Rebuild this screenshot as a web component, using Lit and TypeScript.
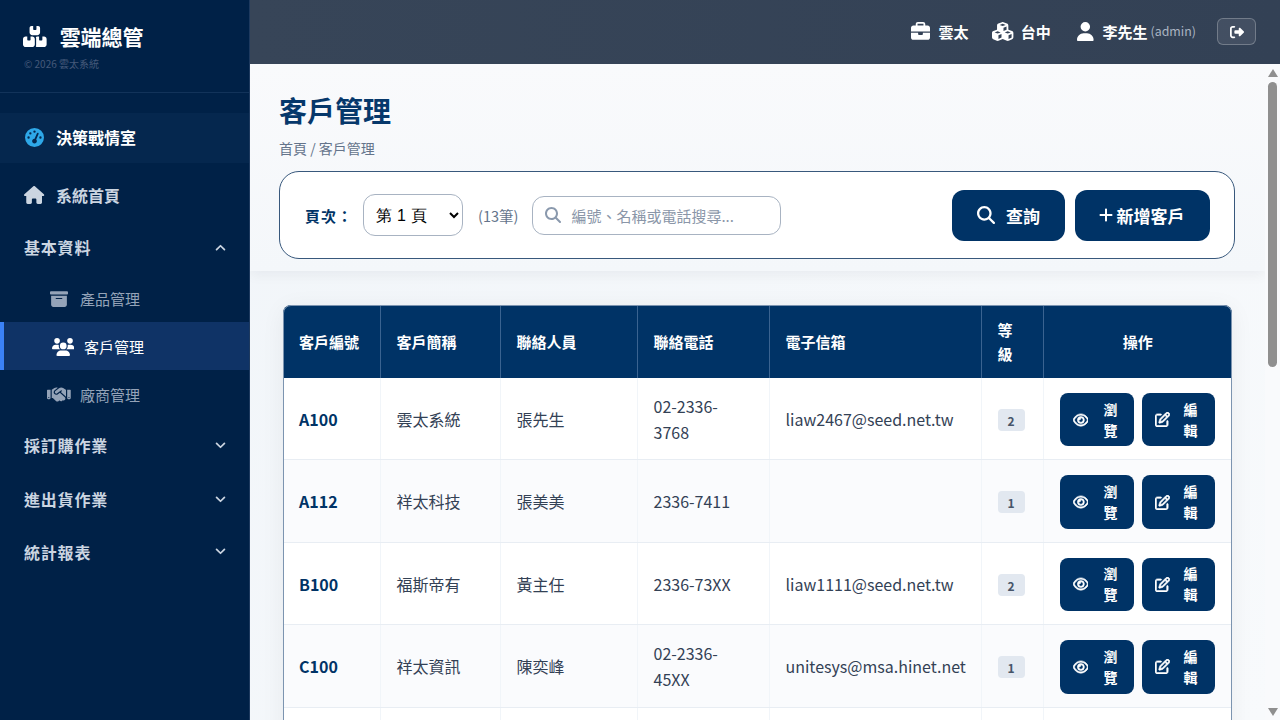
import { LitElement, html, css, svg } from 'lit';
import { customElement } from 'lit/decorators.js';

const icons: Record<string, [number, string]> = {
  boxes: [576, 'M248 0H208c-26.5 0-48 21.5-48 48V160c0 35.3 28.7 64 64 64H352c35.3 0 64-28.7 64-64V48c0-26.5-21.5-48-48-48H328V80c0 8.8-7.2 16-16 16H264c-8.8 0-16-7.2-16-16V0zM64 256c-35.3 0-64 28.7-64 64V448c0 35.3 28.7 64 64 64H224c35.3 0 64-28.7 64-64V320c0-35.3-28.7-64-64-64H184v80c0 8.8-7.2 16-16 16H120c-8.8 0-16-7.2-16-16V256H64zM352 512H512c35.3 0 64-28.7 64-64V320c0-35.3-28.7-64-64-64H472v80c0 8.8-7.2 16-16 16H408c-8.8 0-16-7.2-16-16V256H352c-15 0-28.8 5.2-39.7 13.8c4.9 10.4 7.7 22 7.7 34.2V464c0 12.2-2.8 23.8-7.7 34.2C323.2 506.8 337 512 352 512z'],
  gauge: [512, 'M0 256a256 256 0 1 1 512 0A256 256 0 1 1 0 256zM288 96a32 32 0 1 0 -64 0 32 32 0 1 0 64 0zM256 416c35.3 0 64-28.7 64-64c0-17.4-6.9-33.1-18.1-44.6L366 161.7c5.3-12.1-.2-26.3-12.3-31.6s-26.3 .2-31.6 12.3L257.9 288c-.6 0-1.3 0-1.9 0c-35.3 0-64 28.7-64 64s28.7 64 64 64zM176 144a32 32 0 1 0 -64 0 32 32 0 1 0 64 0zM96 288a32 32 0 1 0 0-64 32 32 0 1 0 0 64zm352-32a32 32 0 1 0 -64 0 32 32 0 1 0 64 0z'],
  home: [576, 'M575.8 255.5c0 18-15 32.1-32 32.1h-32l.7 160.2c0 2.7-.2 5.4-.5 8.1V472c0 22.1-17.9 40-40 40H456c-1.1 0-2.2 0-3.3-.1c-1.4 .1-2.8 .1-4.2 .1H416 392c-22.1 0-40-17.9-40-40V448 384c0-17.7-14.3-32-32-32H256c-17.7 0-32 14.3-32 32v64 24c0 22.1-17.9 40-40 40H160 128.1c-1.5 0-3-.1-4.5-.2c-1.2 .1-2.4 .2-3.6 .2H104c-22.1 0-40-17.9-40-40V360c0-.9 0-1.9 .1-2.8V287.6H32c-18 0-32-14-32-32.1c0-9 3-17 10-24L266.4 8c7-7 15-8 22-8s15 2 21 7L564.8 231.5c8 7 12 15 11 24z'],
  archive: [512, 'M32 32H480c17.7 0 32 14.3 32 32V96c0 17.7-14.3 32-32 32H32C14.3 128 0 113.7 0 96V64C0 46.3 14.3 32 32 32zm0 128H480V416c0 35.3-28.7 64-64 64H96c-35.3 0-64-28.7-64-64V160zm128 80c0 8.8 7.2 16 16 16H336c8.8 0 16-7.2 16-16s-7.2-16-16-16H176c-8.8 0-16 7.2-16 16z'],
  users: [640, 'M144 0a80 80 0 1 1 0 160A80 80 0 1 1 144 0zM512 0a80 80 0 1 1 0 160A80 80 0 1 1 512 0zM0 298.7C0 239.8 47.8 192 106.7 192h42.7c15.9 0 31 3.5 44.6 9.7c-1.3 7.2-1.9 14.7-1.9 22.3c0 38.2 16.8 72.5 43.3 96c-.2 0-.4 0-.7 0H21.3C9.6 320 0 310.4 0 298.7zM405.3 320c-.2 0-.4 0-.7 0c26.6-23.5 43.3-57.8 43.3-96c0-7.6-.7-15-1.9-22.3c13.6-6.3 28.7-9.7 44.6-9.7h42.7C592.2 192 640 239.8 640 298.7c0 11.8-9.6 21.3-21.3 21.3H405.3zM224 224a96 96 0 1 1 192 0 96 96 0 1 1 -192 0zM128 485.3C128 411.7 187.7 352 261.3 352H378.7C452.3 352 512 411.7 512 485.3c0 14.7-11.9 26.7-26.7 26.7H154.7c-14.7 0-26.7-11.9-26.7-26.7z'],
  handshake: [640, 'M323.4 85.2l-96.8 78.4c-16.1 13-19.2 36.4-7 53.1c12.9 17.8 38 21.3 55.3 7.8l99.3-77.2c7-5.4 17-4.2 22.5 2.8s4.2 17-2.8 22.5l-20.9 16.2L512 316.8V128h-.7l-3.9-2.5L434.8 79c-15.3-9.8-33.2-15-51.4-15c-21.8 0-43 7.5-60 21.2zm22.8 124.4l-51.7 40.2C263 274.4 217.3 268 193.7 235.6c-22.2-30.5-16.6-73.1 12.7-96.8l83.2-67.3c-11.6-4.9-24.1-7.4-36.8-7.4C234 64 215.7 69.6 200 80l-72 48V352h28.2l91.4 83.4c19.6 17.9 49.9 16.5 67.8-3.1c5.5-6.1 9.2-13.2 11.1-20.6l17 15.6c19.5 17.9 49.9 16.6 67.8-2.9c4.5-4.9 7.8-10.6 9.9-16.5c19.4 13 45.8 10.3 62.1-7.5c17.9-19.5 16.6-49.9-2.9-67.8l-134.2-123zM16 128c-8.8 0-16 7.2-16 16V352c0 17.7 14.3 32 32 32H64c17.7 0 32-14.3 32-32V128H16zM48 320a16 16 0 1 1 0 32 16 16 0 1 1 0-32zM544 128V352c0 17.7 14.3 32 32 32h32c17.7 0 32-14.3 32-32V144c0-8.8-7.2-16-16-16H544zm32 208a16 16 0 1 1 32 0 16 16 0 1 1 -32 0z'],
  briefcase: [512, 'M184 48H328c4.4 0 8 3.6 8 8V96H176V56c0-4.4 3.6-8 8-8zm-56 8V96H64C28.7 96 0 124.7 0 160v96H192 320 512V160c0-35.3-28.7-64-64-64H384V56c0-30.9-25.1-56-56-56H184c-30.9 0-56 25.1-56 56zM512 288H320v32c0 17.7-14.3 32-32 32H224c-17.7 0-32-14.3-32-32V288H0V416c0 35.3 28.7 64 64 64H448c35.3 0 64-28.7 64-64V288z'],
  cubes: [576, 'M290.8 48.6l78.4 29.7L288 109.5 206.8 78.3l78.4-29.7c1.8-.7 3.8-.7 5.7 0zM136 92.5V204.7c-1.3 .4-2.6 .8-3.9 1.3l-96 36.4C14.4 250.6 0 271.5 0 294.7V413.9c0 22.2 13.1 42.3 33.5 51.3l96 42.2c14.4 6.3 30.7 6.3 45.1 0L288 457.5l113.5 49.9c14.4 6.3 30.7 6.3 45.1 0l96-42.2c20.3-8.9 33.5-29.1 33.5-51.3V294.7c0-23.3-14.4-44.1-36.1-52.4l-96-36.4c-1.3-.5-2.6-.9-3.9-1.3V92.5c0-23.3-14.4-44.1-36.1-52.4l-96-36.4c-12.8-4.8-26.9-4.8-39.7 0l-96 36.4C150.4 48.4 136 69.3 136 92.5zM392 210.6l-82.4 31.2V152.6L392 121v89.6zM154.8 250.9l78.4 29.7L152 311.7 70.8 280.6l78.4-29.7c1.8-.7 3.8-.7 5.7 0zm18.8 204.4V354.8L256 323.2v95.9l-82.4 36.2zM421.2 250.9c1.8-.7 3.8-.7 5.7 0l78.4 29.7L424 311.7l-81.2-31.1 78.4-29.7zM523.2 421.2l-77.6 34.1V354.8L528 323.2v90.7c0 3.2-1.9 6-4.8 7.3z'],
  user: [448, 'M224 256A128 128 0 1 0 224 0a128 128 0 1 0 0 256zm-45.7 48C79.8 304 0 383.8 0 482.3C0 498.7 13.3 512 29.7 512H418.3c16.4 0 29.7-13.3 29.7-29.7C448 383.8 368.2 304 269.7 304H178.3z'],
  logout: [512, 'M377.9 105.9L500.7 228.7c7.2 7.2 11.3 17.1 11.3 27.3s-4.1 20.1-11.3 27.3L377.9 406.1c-6.4 6.4-15 9.9-24 9.9c-18.7 0-33.9-15.2-33.9-33.9l0-62.1-128 0c-17.7 0-32-14.3-32-32l0-64c0-17.7 14.3-32 32-32l128 0 0-62.1c0-18.7 15.2-33.9 33.9-33.9c9 0 17.6 3.6 24 9.9zM160 96L96 96c-17.7 0-32 14.3-32 32l0 256c0 17.7 14.3 32 32 32l64 0c17.7 0 32 14.3 32 32s-14.3 32-32 32l-64 0c-53 0-96-43-96-96L0 128C0 75 43 32 96 32l64 0c17.7 0 32 14.3 32 32s-14.3 32-32 32z'],
  search: [512, 'M416 208c0 45.9-14.9 88.3-40 122.7L502.6 457.4c12.5 12.5 12.5 32.8 0 45.3s-32.8 12.5-45.3 0L330.7 376c-34.4 25.2-76.8 40-122.7 40C93.1 416 0 322.9 0 208S93.1 0 208 0S416 93.1 416 208zM208 352a144 144 0 1 0 0-288 144 144 0 1 0 0 288z'],
  plus: [448, 'M256 80c0-17.7-14.3-32-32-32s-32 14.3-32 32V224H48c-17.7 0-32 14.3-32 32s14.3 32 32 32H192V432c0 17.7 14.3 32 32 32s32-14.3 32-32V288H400c17.7 0 32-14.3 32-32s-14.3-32-32-32H256V80z'],
  eye: [576, 'M288 80c-65.2 0-118.8 29.6-159.9 67.7C89.6 183.5 63 226 49.4 256c13.6 30 40.2 72.5 78.6 108.3C169.2 402.4 222.8 432 288 432s118.8-29.6 159.9-67.7C486.4 328.5 513 286 526.6 256c-13.6-30-40.2-72.5-78.6-108.3C406.8 109.6 353.2 80 288 80zM95.4 112.6C142.5 68.8 207.2 32 288 32s145.5 36.8 192.6 80.6c46.8 43.5 78.1 95.4 93 131.1c3.3 7.9 3.3 16.7 0 24.6c-14.9 35.7-46.2 87.7-93 131.1C433.5 443.2 368.8 480 288 480s-145.5-36.8-192.6-80.6C48.6 356 17.3 304 2.5 268.3c-3.3-7.9-3.3-16.7 0-24.6C17.3 208 48.6 156 95.4 112.6zM288 336c44.2 0 80-35.8 80-80s-35.8-80-80-80c-.7 0-1.3 0-2 0c1.3 5.1 2 10.5 2 16c0 35.3-28.7 64-64 64c-5.5 0-10.9-.7-16-2c0 .7 0 1.3 0 2c0 44.2 35.8 80 80 80zm0-208a128 128 0 1 1 0 256 128 128 0 1 1 0-256z'],
  edit: [512, 'M441 58.9L453.1 71c9.4 9.4 9.4 24.6 0 33.9L424 134.1 377.9 88 407 58.9c9.4-9.4 24.6-9.4 33.9 0zM209.8 256.2L344 121.9 390.1 168 255.8 302.2c-2.9 2.9-6.5 5-10.4 6.1l-58.5 16.7 16.7-58.5c1.1-3.9 3.2-7.5 6.1-10.4zM373.1 25L175.8 222.2c-8.7 8.7-15 19.4-18.3 31.1l-28.6 100c-2.4 8.4-.1 17.4 6.1 23.6s15.2 8.5 23.6 6.1l100-28.6c11.8-3.4 22.5-9.7 31.1-18.3L487 138.9c28.1-28.1 28.1-73.7 0-101.8L474.9 25C446.8-3.1 401.2-3.1 373.1 25zM88 64C39.4 64 0 103.4 0 152V424c0 48.6 39.4 88 88 88H360c48.6 0 88-39.4 88-88V312c0-13.3-10.7-24-24-24s-24 10.7-24 24V424c0 22.1-17.9 40-40 40H88c-22.1 0-40-17.9-40-40V152c0-22.1 17.9-40 40-40H200c13.3 0 24-10.7 24-24s-10.7-24-24-24H88z'],
};

// height in px, width follows the icon's viewBox
const icon = (name: string, h: number) => {
  const [w, d] = icons[name];
  return html`<svg class="ic" viewBox="0 0 ${w} 512" width=${(h * w) / 512} height=${h} fill="currentColor">${svg`<path d=${d}></path>`}</svg>`;
};

const chevron = (up: boolean) => html`<svg class="chev" viewBox="0 0 12 8" width="11" height="7" fill="none" stroke="currentColor" stroke-width="2" stroke-linecap="round" stroke-linejoin="round">
  ${svg`<polyline points=${up ? '1.5,6.5 6,2 10.5,6.5' : '1.5,1.5 6,6 10.5,1.5'}></polyline>`}
</svg>`;

const arrow = (up: boolean) => html`<svg class="arrow" viewBox="0 0 10 8" width="10" height="8" fill="currentColor">
  ${svg`<polygon points=${up ? '5,0 10,8 0,8' : '0,0 10,0 5,8'}></polygon>`}
</svg>`;

const customers = [
  { id: 'A100', name: '雲太系統', contact: '張先生', phone: '02-2336-3768', mail: 'liaw2467@seed.net.tw', level: 2 },
  { id: 'A112', name: '祥太科技', contact: '張美美', phone: '2336-7411', mail: '', level: 1 },
  { id: 'B100', name: '福斯帝有', contact: '黃主任', phone: '2336-73XX', mail: 'liaw1111@seed.net.tw', level: 2 },
  { id: 'C100', name: '祥太資訊', contact: '陳奕峰', phone: '02-2336-45XX', mail: 'unitesys@msa.hinet.net', level: 1 },
];

@customElement('app-root')
export class AppRoot extends LitElement {
  static styles = css`
    :host {
      display: grid;
      grid-template-columns: 250px 1fr;
      height: 100vh;
      overflow: hidden;
      font-family: "Noto Sans CJK TC", "Noto Sans", sans-serif;
      color: #334155;
    }
    .ic { display: block; flex: none; }

    /* sidebar */
    .side {
      background: #002147;
      color: #cbd5e1;
      border-right: 1px solid #1e3a5f;
      box-sizing: border-box;
      height: 100vh;
      overflow: hidden;
    }
    .brand {
      height: 93px;
      box-sizing: border-box;
      padding: 21px 24px 0 23px;
      border-bottom: 1px solid #12335a;
      margin-bottom: 20px;
    }
    .brand-row {
      display: flex;
      align-items: center;
      gap: 13px;
      color: #fff;
      font-size: 21px;
      font-weight: 700;
      line-height: 30px;
    }
    .copy { font-size: 10px; color: #45597a; line-height: 16px; margin: 5px 0 0 1px; }
    .item {
      display: flex;
      align-items: center;
      height: 52px;
      box-sizing: border-box;
      padding: 0 23px 2px 24px;
      font-size: 16px;
      font-weight: 700;
    }
    .item .lead { width: 21px; display: flex; justify-content: center; margin-right: 11px; }
    .item .chev { margin-left: auto; }
    .wide { letter-spacing: 0.8px; }
    .dash {
      height: 50px;
      background: #05274e;
      color: #fff;
      margin-bottom: 7px;
    }
    .dash .lead { color: #2ea8e8; }
    .group { margin-bottom: 2.2px; }
    .gap-a { margin-bottom: 2.2px; }
    .gap-b { margin-bottom: 0.4px; }
    .sub {
      display: flex;
      align-items: center;
      height: 48px;
      box-sizing: border-box;
      padding: 1.5px 0 0 47px;
      font-size: 15px;
      color: #94a3b8;
    }
    .sub .lead { width: 24px; display: flex; justify-content: center; margin-right: 9px; }
    .sub.on {
      background: #0f3366;
      color: #fff;
      border-left: 4px solid #3b82f6;
    }

    /* right column */
    .right { display: flex; flex-direction: column; height: 100vh; min-width: 0; }
    .top {
      flex: none;
      height: 64px;
      box-sizing: border-box;
      background: linear-gradient(90deg, #374558, #334155);
      color: #fff;
      display: flex;
      align-items: center;
      justify-content: flex-end;
      padding: 0 24px 2px 0;
      font-size: 15px;
      font-weight: 700;
    }
    .top-item { display: flex; align-items: center; gap: 8px; margin-right: 24px; }
    .top-cubes { gap: 7px; margin-right: 26px; }
    .top-name { margin-left: 1px; }
    .top-item small { font-size: 12.4px; font-weight: 400; color: #aab4c2; margin-left: -5px; }
    .logout {
      width: 39px;
      height: 27px;
      box-sizing: border-box;
      border: 1px solid rgba(255, 255, 255, 0.25);
      border-radius: 6px;
      background: rgba(255, 255, 255, 0.08);
      color: #fff;
      display: flex;
      align-items: center;
      justify-content: center;
      margin: 0 0 -1px -3px;
    }
    .body { flex: 1; min-height: 0; display: flex; }
    .main {
      flex: 1;
      min-width: 0;
      overflow-y: auto;
      background: linear-gradient(135deg, #f1f5f9, #f8fafc);
    }
    .bar {
      flex: none;
      width: 15px;
      box-sizing: border-box;
      padding: 5px 0 4px;
      background: #f9fafc;
      color: #8f8f8f;
      display: flex;
      flex-direction: column;
      align-items: center;
    }
    .thumb {
      width: 9px;
      height: 285px;
      margin-top: 5px;
      border-radius: 5px;
      background: #8f8f8f;
    }
    .arrow { display: block; flex: none; }
    .arrow-down { margin-top: auto; display: block; }
    .head {
      background: linear-gradient(180deg, #f9fafc, #f4f7fa);
      padding: 25px 30px 12px 29px;
      box-shadow: 0 4px 12px rgba(15, 23, 42, 0.05);
    }
    h1 {
      margin: 0;
      font-size: 28px;
      line-height: 42px;
      font-weight: 700;
      color: #06386b;
    }
    .crumb { font-size: 14px; line-height: 22px; color: #64748b; margin: 6px 0 12px; }
    .filter {
      display: flex;
      align-items: center;
      height: 88px;
      box-sizing: border-box;
      padding: 0 24px 0 25px;
      background: #fff;
      border: 1px solid #38587c;
      border-radius: 20px;
    }
    .filter label { font-size: 15px; font-weight: 700; color: #003366; margin-right: 10px; letter-spacing: 1px; }
    select {
      width: 100px;
      height: 42px;
      border: 1px solid #a8b3c2;
      border-radius: 12px;
      background: #fff;
      padding: 0 8px;
      font-size: 16px;
      letter-spacing: 0.3px;
      color: #000;
    }
    .count { font-size: 14.5px; color: #64748b; margin: 0 14px 0 15px; }
    .search {
      width: 249px;
      height: 39px;
      box-sizing: border-box;
      display: flex;
      align-items: center;
      gap: 10px;
      padding: 0 12px;
      border: 1px solid #a8b3c2;
      border-radius: 12px;
      color: #8a99ad;
      font-size: 15px;
    }
    .search input {
      border: 0;
      outline: 0;
      flex: 1;
      min-width: 0;
      padding: 0;
      font: inherit;
    }
    .search input::placeholder { color: #8a96a8; }
    .btn {
      height: 51px;
      border: 0;
      border-radius: 12px;
      background: #003366;
      color: #fff;
      font: 700 17px "Noto Sans CJK TC", sans-serif;
      display: flex;
      align-items: center;
      justify-content: center;
    }
    .btn-q { width: 113px; gap: 11px; margin-left: auto; }
    .btn-a { width: 135px; gap: 4px; margin-left: 10px; padding: 0 8px 0 6px; }

    /* table */
    .table-wrap {
      margin: 34px 33px 30px;
      border-radius: 8px;
      overflow: hidden;
      outline: 1px solid #7c94b0;
      outline-offset: -1px;
      box-shadow: 0 4px 24px rgba(15, 23, 42, 0.06);
      background: #fff;
    }
    table { width: 100%; border-collapse: collapse; table-layout: fixed; }
    th {
      background: #003366;
      color: #fff;
      font-size: 15px;
      line-height: 24px;
      font-weight: 700;
      text-align: left;
      padding: 12.5px 16px;
      border-right: 1px solid #3a6390;
    }
    th:last-child, td:last-child { border-right: 0; }
    th.c { text-align: center; }
    td {
      font-size: 16px;
      line-height: 25.6px;
      padding: 15px 16px 13px;
      border-right: 1px solid #f1f5f9;
      border-bottom: 1px solid #e8edf3;
      color: #334155;
    }
    tbody tr:nth-child(even) td { background: #fafbfd; }
    td.code { font-weight: 700; color: #003366; }
    td.c { text-align: center; padding-left: 15px; padding-right: 17px; }
    .badge {
      display: inline-block;
      width: 27px;
      height: 22px;
      line-height: 24px;
      border-radius: 4px;
      background: #e2e8f0;
      color: #475569;
      font-size: 12px;
      font-weight: 700;
      text-align: center;
    }
    .acts { display: flex; gap: 8px; }
    .act {
      height: 53.4px;
      border: 0;
      border-radius: 8px;
      background: #003366;
      color: #fff;
      display: flex;
      align-items: center;
      padding: 0 16px 0 13px;
      font: 700 14px/21px "Noto Sans CJK TC", sans-serif;
    }
    .act svg { stroke: currentColor; stroke-width: 22px; }
    .act span { flex: none; width: 14px; margin-left: auto; text-align: center; }
    .w74 { width: 74px; }
    .w73 { width: 73px; padding-right: 17px; }
    .rest td { height: 740px; background: #fff; }
  `;

  render() {
    return html`
      <aside class="side">
        <div class="brand">
          <div class="brand-row">${icon('boxes', 21)}<span>雲端總管</span></div>
          <div class="copy">© 2026 雲太系統</div>
        </div>
        <div class="item dash"><span class="lead">${icon('gauge', 19)}</span>決策戰情室</div>
        <div class="item"><span class="lead">${icon('home', 18)}</span>系統首頁</div>
        <div class="item wide">基本資料${chevron(true)}</div>
        <div class="group">
          <div class="sub"><span class="lead">${icon('archive', 18)}</span>產品管理</div>
          <div class="sub on"><span class="lead">${icon('users', 18)}</span>客戶管理</div>
          <div class="sub"><span class="lead">${icon('handshake', 19)}</span>廠商管理</div>
        </div>
        <div class="item wide gap-a">採訂購作業${chevron(false)}</div>
        <div class="item wide gap-b">進出貨作業${chevron(false)}</div>
        <div class="item wide">統計報表${chevron(false)}</div>
      </aside>
      <div class="right">
        <header class="top">
          <div class="top-item">${icon('briefcase', 19)}<span>雲太</span></div>
          <div class="top-item top-cubes">${icon('cubes', 19)}<span>台中</span></div>
          <div class="top-item">${icon('user', 19)}<span class="top-name">李先生</span><small>(admin)</small></div>
          <button class="logout">${icon('logout', 14)}</button>
        </header>
        <div class="body">
          <main class="main">
            <section class="head">
              <h1>客戶管理</h1>
              <div class="crumb">首頁 / 客戶管理</div>
              <div class="filter">
                <label>頁次：</label>
                <select><option>第 1 頁</option></select>
                <span class="count">(13筆)</span>
                <div class="search">${icon('search', 16)}<input placeholder="編號、名稱或電話搜尋..." /></div>
                <button class="btn btn-q">${icon('search', 18)}<span>查詢</span></button>
                <button class="btn btn-a">${icon('plus', 16)}<span>新增客戶</span></button>
              </div>
            </section>
            <div class="table-wrap">
              <table>
                <colgroup>
                  <col style="width:97px" /><col style="width:120px" /><col style="width:137px" /><col style="width:132px" /><col style="width:212px" /><col style="width:62px" /><col />
                </colgroup>
                <thead>
                  <tr>
                    <th>客戶編號</th><th>客戶簡稱</th><th>聯絡人員</th><th>聯絡電話</th><th>電子信箱</th><th>等級</th><th class="c">操作</th>
                  </tr>
                </thead>
                <tbody>
                  ${customers.map(
                    (c) => html`<tr>
                      <td class="code">${c.id}</td>
                      <td>${c.name}</td>
                      <td>${c.contact}</td>
                      <td>${c.phone}</td>
                      <td>${c.mail}</td>
                      <td class="c"><span class="badge">${c.level}</span></td>
                      <td>
                        <div class="acts">
                          <button class="act w74">${icon('eye', 14)}<span>瀏覽</span></button>
                          <button class="act w73">${icon('edit', 15)}<span>編輯</span></button>
                        </div>
                      </td>
                    </tr>`
                  )}
                  <tr class="rest"><td></td><td></td><td></td><td></td><td></td><td></td><td></td></tr>
                </tbody>
              </table>
            </div>
          </main>
          <div class="bar">
            ${arrow(true)}
            <div class="thumb"></div>
            <div class="arrow-down">${arrow(false)}</div>
          </div>
        </div>
      </div>
    `;
  }
}
